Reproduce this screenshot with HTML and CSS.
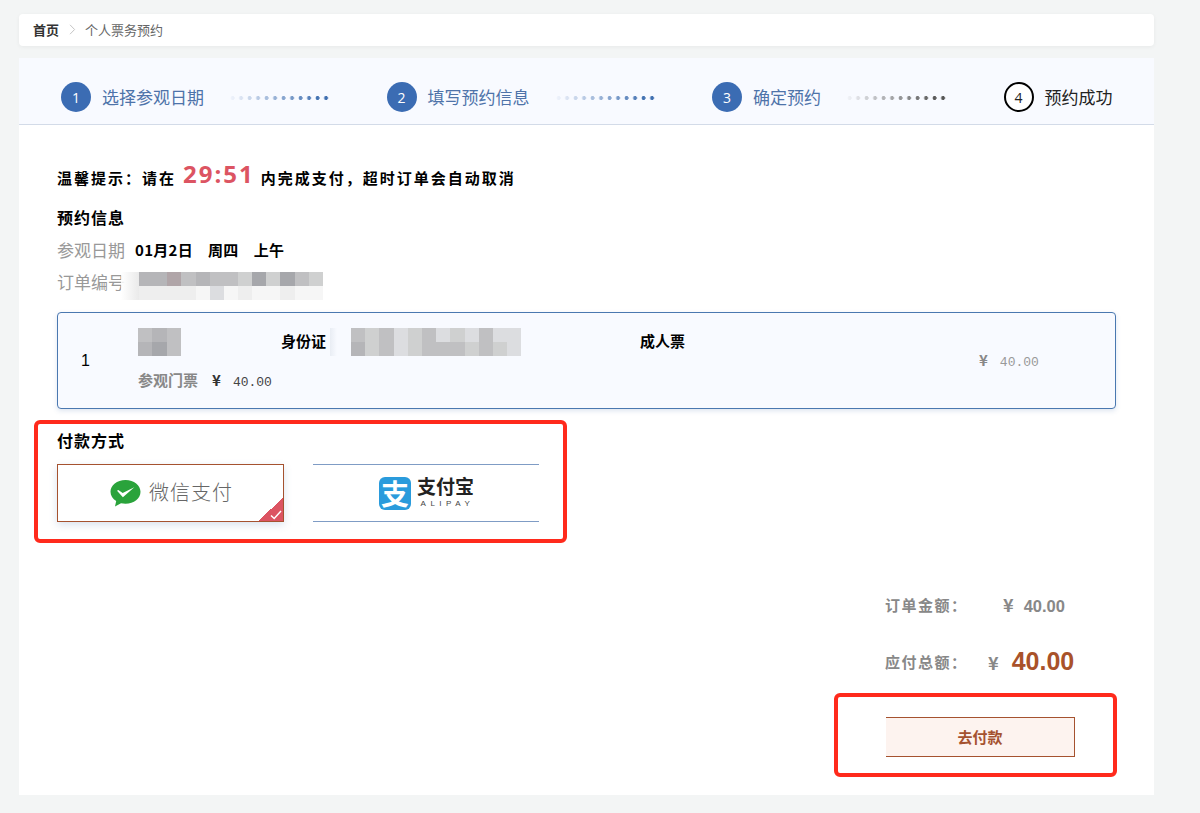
FILE: index.html
```html
<!DOCTYPE html>
<html lang="zh-CN">
<head>
<meta charset="utf-8">
<title>个人票务预约</title>
<link rel="stylesheet" href="styles.css">
</head>
<body>
<div class="page">
  <nav class="crumbs">
    <span class="crumb-home">首页</span>
    <svg class="crumb-sep" width="7" height="11" viewBox="0 0 7 11"><path d="M1 .8 5.6 5.5 1 10.2" fill="none" stroke="#c4c4c4" stroke-width="1"/></svg>
    <span class="crumb-cur">个人票务预约</span>
  </nav>
  <main class="panel">
    <header class="steps">
      <div class="step"><span class="step-num">1</span><span class="step-text">选择参观日期</span><span class="dots"></span></div>
      <div class="step"><span class="step-num">2</span><span class="step-text">填写预约信息</span><span class="dots"></span></div>
      <div class="step"><span class="step-num">3</span><span class="step-text">确定预约</span><span class="dots dots-grey"></span></div>
      <div class="step step-todo"><span class="step-num">4</span><span class="step-text">预约成功</span></div>
    </header>
    <section class="body">
      <p class="tip">温馨提示：请在<span class="timer">29:51</span>内完成支付，超时订单会自动取消</p>
      <h2 class="title">预约信息</h2>
      <div class="info"><span class="info-label">参观日期</span><b class="info-val">01月2日</b><b class="info-val">周四</b><b class="info-val">上午</b></div>
      <div class="info info-order"><span class="info-label">订单编号</span>
        <div class="mosaic mosaic-order">
          <i class="g4"></i><i class="g4"></i><i class="r1"></i><i class="g5"></i><i class="g4"></i><i class="g5"></i><i class="g5"></i><i class="g6"></i><i class="g3"></i><i class="g6"></i><i class="g3"></i><i class="g5"></i><i class="g6"></i>
          <i class="g8"></i><i class="g8"></i><i class="g8"></i><i class="g8"></i><i class="g9"></i><i class="g7"></i><i class="g9"></i><i class="g8"></i><i class="g9"></i><i class="g9"></i><i class="g8"></i><i class="g9"></i><i class="g9"></i>
        </div>
      </div>
      <div class="ticket">
        <span class="t-index">1</span>
        <div class="mosaic mosaic-name">
          <i class="g5"></i><i class="g4"></i><i class="g5"></i>
          <i class="g4"></i><i class="g3"></i><i class="g5"></i>
        </div>
        <b class="t-idtype">身份证</b>
        <div class="mosaic mosaic-id">
          <i class="g5"></i><i class="g6"></i><i class="g5"></i><i class="g7"></i><i class="g6"></i><i class="g5"></i><i class="g7"></i><i class="g6"></i><i class="g7"></i><i class="g5"></i><i class="g7"></i><i class="g7"></i>
          <i class="g4"></i><i class="g6"></i><i class="g5"></i><i class="g7"></i><i class="g6"></i><i class="g5"></i><i class="g5"></i><i class="g5"></i><i class="g6"></i><i class="g5"></i><i class="g6"></i><i class="g7"></i>
        </div>
        <b class="t-type">成人票</b>
        <span class="t-price"><span class="yen">¥</span>40.00</span>
        <div class="t-sub"><b>参观门票</b><span class="t-subprice"><span class="yen yen-dark">¥</span>40.00</span></div>
      </div>
      <h2 class="title title-pay">付款方式</h2>
      <div class="pay-list">
        <div class="pay pay-active">
          <svg class="wx-icon" width="31" height="27" viewBox="0 0 31 27"><path d="M15.5 0C7 0 .5 5.2.5 11.8c0 3.800 2.200 7.100 5.700 9.300L5 26.500l6-3.300c1.400.3 2.900.5 4.500.5 8.500 0 15-5.300 15-11.900S24 0 15.500 0z" fill="#2aa33b"/><path d="M7 10.800l1.300-.9 4.400 3.200L24.300 7.200 12.900 17.300z" fill="#fff"/></svg>
          <span class="wx-text">微信支付</span>
          <span class="pay-corner"><svg width="12" height="10" viewBox="0 0 12 10"><path d="M1 5.500 4.200 8.500 11 1" fill="none" stroke="#fff" stroke-width="1.500"/></svg></span>
        </div>
        <div class="pay pay-ali">
          <span class="ali-icon">支</span>
          <span class="ali-name"><span class="ali-cn">支付宝</span><span class="ali-en">ALIPAY</span></span>
        </div>
      </div>
      <div class="summary">
        <div class="sum-row"><span class="sum-label">订单金额：</span><span class="sum-val"><span class="yen yen-sum">¥</span>40.00</span></div>
        <div class="sum-row sum-total"><span class="sum-label">应付总额：</span><span class="sum-val"><span class="yen yen-sum">¥</span><span class="sum-big">40.00</span></span></div>
        <button class="go-pay">去付款</button>
      </div>
    </section>
  </main>
  <div class="mark mark-pay"></div>
  <div class="mark mark-btn"></div>
</div>
</body>
</html>
```
FILE: styles.css
```css
* { box-sizing: border-box; }
html, body { margin: 0; height: 100%; }
body {
  background: #f3f5f5;
  font-family: "Noto Sans CJK SC", "Liberation Sans", sans-serif;
  color: #000;
  overflow: hidden;
}
.page { position: relative; width: 1200px; height: 813px; padding: 14px 46px 18px 19px; }
.crumbs {
  display: flex; align-items: center; height: 32px; padding: 0 0 2px 14px;
  background: #fff; border-radius: 4px; box-shadow: 0 1px 4px rgba(0,0,0,.05);
}
.crumb-home { font-size: 13px; font-weight: 700; color: #333; }
.crumb-sep { margin: 0 9px 0 10px; }
.crumb-cur { font-size: 13px; color: #666; }
.panel { margin-top: 12px; height: 737px; background: #fff; }
.steps {
  display: flex; align-items: center; height: 67px; padding: 14px 0 2px 42px;
  background: #f8faff; border-bottom: 1px solid #d3dbe8;
}
.step { display: flex; align-items: center; }
.step-num {
  display: flex; align-items: center; justify-content: center;
  width: 30px; height: 30px; border-radius: 50%;
  background: #3b6cb3; color: #fff; font-size: 14px;
  font-family: "Open Sans", "Liberation Sans", sans-serif;
}
.step-text { margin-left: 11px; font-size: 17px; color: #4e73a9; line-height: 24px; }
.dots {
  width: 100px; height: 6px; margin: 2px 56.500px 0 26px;
  background: radial-gradient(circle at 2.500px 3px, #3f6fb0 1.700px, transparent 2.200px) 0 0 / 8.500px 6px repeat-x;
  -webkit-mask-image: linear-gradient(to right, rgba(0,0,0,.04), #000 90%);
  mask-image: linear-gradient(to right, rgba(0,0,0,.04), #000 90%);
}
.dots-grey { background-image: radial-gradient(circle at 2.500px 3px, #555 1.700px, transparent 2.200px); }
.step-todo .step-num { background: #fff; border: 2px solid #000; color: #222; }
.step-todo .step-text { color: #222; }
.body { padding: 0 38px; }
.tip {
  display: flex; align-items: center; margin: 36px 0 0; height: 34px;
  font-size: 15px; font-weight: 700; letter-spacing: 2px; line-height: 34px;
}
.timer {
  margin: -8px 6px 0 7px; font-family: "Open Sans", sans-serif;
  font-size: 24px; font-weight: 700; letter-spacing: 2px; color: #dc5462; line-height: 34px;
}
.title { margin: 10px 0 0; font-size: 16px; font-weight: 700; line-height: 24px; letter-spacing: 1px; }
.info { display: flex; align-items: center; height: 32px; }
.title + .info { margin-top: 4px; }
.info-label { font-size: 17px; color: #999; width: 78px; flex: none; white-space: nowrap; }
.info-val { font-size: 15px; margin-right: 15px; letter-spacing: .3px; }
.mosaic { display: grid; }
.mosaic i { display: block; }
.mosaic-order {
  position: relative; margin: 9px 0 0 4px; grid-template-columns: repeat(13, 14.150px); grid-auto-rows: 14px;
}
.mosaic-order::before {
  content: ""; position: absolute; left: -18px; top: 0; width: 18px; height: 28px;
  background: linear-gradient(to right, rgba(255,255,255,.85), #eaeaea);
}
.g3 { background: #a6a7ab; }
.g4 { background: #b5b5b8; }
.g5 { background: #c0c0c2; }
.g6 { background: #cfd0d0; }
.g7 { background: #dcdde0; }
.g8 { background: #eeeeee; }
.g9 { background: #f6f6f6; }
.r1 { background: #b0a5a8; }
.ticket {
  display: grid; grid-template-columns: 57px 143px 70px 289px 339px auto; grid-template-rows: 36px 28px;
  height: 97px; margin-top: 15px; padding: 15px 0 0 23px;
  background: #f8faff; border: 1px solid #4a78b0; border-radius: 4px;
  box-shadow: 0 2px 5px rgba(70,110,170,.18);
}
.t-index { grid-row: 1 / 3; align-self: center; margin-top: 2px; font-family: "Liberation Sans", sans-serif; font-size: 16px; }
.mosaic-name { grid-template-columns: repeat(3, 14.300px); grid-auto-rows: 14px; align-self: start; justify-self: start; }
.mosaic-id { position: relative; grid-template-columns: repeat(12, 14.200px); grid-auto-rows: 14px; align-self: start; justify-self: start; }
.mosaic-id::before {
  content: ""; position: absolute; left: -21px; top: 0; width: 7px; height: 28px;
  background: linear-gradient(to right, #e9edf4, #f8faff);
}
.t-idtype, .t-type { font-size: 15px; line-height: 26px; }
.t-price {
  grid-row: 1 / 3; grid-column: 6; align-self: center; margin-top: -2px;
  font-family: "Liberation Mono", monospace; font-size: 13px; color: #999;
}
.yen { font-family: "Noto Sans CJK SC", sans-serif; font-size: 15px; font-weight: 700; margin-right: 12px; color: #888; }
.yen-dark { color: #333; }
.t-sub { grid-column: 2 / 5; grid-row: 2; display: flex; align-items: center; height: 24px; margin-top: 3px; }
.t-sub b { font-size: 15px; color: #888; }
.t-subprice { margin-left: 14px; font-family: "Liberation Mono", monospace; font-size: 13px; color: #444; }
.title-pay { margin-top: 19px; }
.pay-list { display: flex; gap: 29px; margin-top: 12px; }
.pay { position: relative; display: flex; align-items: center; justify-content: center; width: 227px; height: 58px; }
.pay-active { padding-left: 2px; border: 1px solid #a5522f; box-shadow: 0 3px 8px rgba(70,110,170,.2); }
.pay-ali { width: 226px; padding-left: 1px; border-top: 1px solid #7f9cc5; border-bottom: 1px solid #7f9cc5; }
.wx-icon { margin-right: 8px; }
.wx-text { margin-top: -3px; font-size: 20px; font-weight: 300; color: #666; letter-spacing: 1px; }
.pay-corner {
  position: absolute; right: 0; bottom: 0; width: 24px; height: 24px;
  background: linear-gradient(135deg, transparent 50%, #dc5462 50%);
}
.pay-corner svg { position: absolute; right: 1px; bottom: 1px; }
.ali-icon {
  display: flex; align-items: center; justify-content: center;
  width: 32px; height: 33px; border-radius: 6px; background: #2a9bdc;
  color: #fff; font-size: 28px; line-height: 1; font-weight: 700;
}
.ali-name { display: flex; flex-direction: column; align-items: center; margin: -5px 0 0 6px; }
.ali-cn { font-size: 19px; font-weight: 700; line-height: 26px; color: #222; }
.ali-en { font-family: "Liberation Sans", sans-serif; font-size: 8px; line-height: 9px; letter-spacing: 4.500px; margin-right: -4px; color: #444; }
.summary { display: flex; flex-direction: column; margin: 67px 40px 0 auto; width: 190px; }
.sum-row { display: flex; align-items: center; height: 30px; font-weight: 700; color: #888; }
.sum-label { margin-left: -1px; font-size: 15px; letter-spacing: 1.500px; width: 100px; flex: none; white-space: nowrap; }
.sum-val { margin-left: 18px; font-family: "Liberation Sans", sans-serif; font-size: 16.500px; white-space: nowrap; }
.yen-sum { font-size: 18px; margin-right: 10px; }
.sum-total { margin-top: 27px; }
.sum-total .sum-val { margin-left: 3px; }
.sum-total .yen-sum { margin-right: 13px; }
.sum-big { font-size: 25px; color: #a9522a; }
.go-pay {
  height: 40px; margin-top: 41px; width: 189px; padding: 0 0 2px;
  background: #fdf3ef; border: 1px solid #a5522f; border-left: 0;
  font-family: inherit; font-size: 15px; font-weight: 700; color: #a5522f;
}
.mark { position: absolute; border: 4px solid #ff2a1c; border-radius: 6px; }
.mark-pay { left: 34px; top: 420px; width: 533px; height: 123px; }
.mark-btn { left: 834px; top: 693px; width: 283px; height: 84px; }
```
